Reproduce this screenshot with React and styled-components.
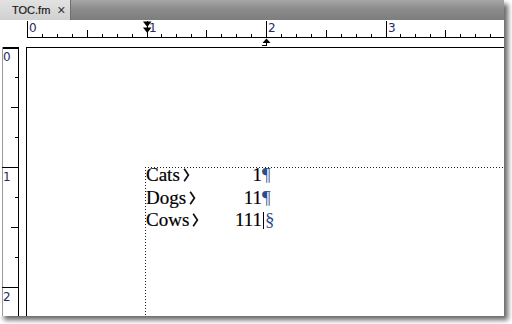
import React from "react";
import styled, { createGlobalStyle } from "styled-components";

const GlobalStyle = createGlobalStyle`
  html, body {
    margin: 0;
    background: #fff;
  }
  body {
    width: 512px;
    height: 324px;
    overflow: hidden;
  }
`;

const INCH = 119.5;
const EIGHTH = INCH / 8;

const entries = [
  { name: "Cats", page: "1", end: "para" },
  { name: "Dogs", page: "11", end: "para" },
  { name: "Cows", page: "111", end: "flow" },
];

function HRuler() {
  const ticks = [];
  for (let i = 0; i <= 32; i++) {
    const x = Math.round(27 + i * EIGHTH) + 0.5;
    if (x > 504) break;
    const top = i % 8 === 0 ? 1 : i % 4 === 0 ? 10 : 14;
    ticks.push(<line key={i} x1={x} x2={x} y1={top} y2={17} />);
  }
  const labels = [0, 1, 2, 3].map((n) => (
    <text key={n} x={Math.round(27 + n * INCH) + 2} y={11.5}>
      {n}
    </text>
  ));
  return (
    <RulerSvg width="504" height="27" shapeRendering="crispEdges">
      <g stroke="#000" strokeWidth="1">
        {ticks}
        <line x1="27" x2="504" y1="17.5" y2="17.5" />
        <line x1="266.5" x2="266.5" y1="22" y2="26" />
        <line x1="262" x2="266" y1="25.5" y2="25.5" />
      </g>
      <g fill="#000" shapeRendering="auto">
        <polygon points="143,1.5 151.5,1.5 147.25,7" />
        <polygon points="143,7.5 151.5,7.5 147.25,13" />
        <polygon points="262.5,23 270.5,23 266.5,18.5" />
      </g>
      <RulerText>{labels}</RulerText>
    </RulerSvg>
  );
}

function VRuler() {
  const ticks = [];
  for (let i = 1; i <= 9; i++) {
    const y = i * 30 + 0.5;
    const left = i % 4 === 0 ? 2 : i % 2 === 0 ? 11 : 15;
    ticks.push(<line key={i} x1={left} x2={18} y1={y} y2={y} />);
  }
  const labels = [0, 1, 2].map((n) => (
    <text key={n} x={3} y={n * 120 + 13.5}>
      {n}
    </text>
  ));
  return (
    <RulerSvg width="26" height="269" shapeRendering="crispEdges">
      <line x1="2.5" x2="2.5" y1="0" y2="269" stroke="#9a9a9a" />
      <rect x="3" y="0" width="16" height="2" fill="#000" />
      <g stroke="#000" strokeWidth="1">
        <line x1="18.5" x2="18.5" y1="0" y2="269" />
        {ticks}
      </g>
      <RulerText>{labels}</RulerText>
    </RulerSvg>
  );
}

function TabSymbol() {
  return (
    <TabGlyph width="7" height="14" viewBox="0 0 7 14">
      <path d="M1.2 0.8 L5.4 7 L1.2 13.2" fill="none" stroke="#111" strokeWidth="1.7" />
    </TabGlyph>
  );
}

function EndMark({ kind }) {
  if (kind === "flow") {
    return (
      <>
        <Cursor />
        <Symbol>§</Symbol>
      </>
    );
  }
  return <Symbol>¶</Symbol>;
}

export default function App() {
  return (
    <>
      <GlobalStyle />
      <Window>
        <TabBar>
          <Tab>
            <TabTitle>TOC.fm</TabTitle>
            <Close>×</Close>
          </Tab>
        </TabBar>
        <HRuler />
        <Main>
          <VRuler />
          <Page>
            <TextFrame>
              <TextBlock>
                {entries.map((e) => (
                  <Line key={e.name}>
                    <Leader>
                      <Name>
                        {e.name}
                        <TabSymbol />
                      </Name>
                      <span>{e.page}</span>
                    </Leader>
                    <EndMark kind={e.end} />
                  </Line>
                ))}
              </TextBlock>
            </TextFrame>
          </Page>
        </Main>
      </Window>
    </>
  );
}

const Window = styled.div`
  width: 504px;
  height: 316px;
  background: #fff;
  display: flex;
  flex-direction: column;
  overflow: hidden;
  box-shadow: 4px 4px 5px rgba(0, 0, 0, 0.6);
`;

const TabBar = styled.div`
  height: 20px;
  flex: none;
  display: flex;
  background: linear-gradient(#a6a6a6, #8c8c8c 45%, #7d7d7d);
`;

const Tab = styled.div`
  width: 71px;
  display: flex;
  align-items: center;
  gap: 7px;
  padding-left: 12px;
  box-sizing: border-box;
  background: linear-gradient(#e2e2e2, #d0d0d0);
  border-right: 1px solid #6e6e6e;
  font-family: "Liberation Sans", Arial, sans-serif;
  color: #1a1a1a;
`;

const TabTitle = styled.span`
  font-size: 11px;
  font-weight: 500;
  -webkit-text-stroke: 0.2px #1a1a1a;
`;

const Close = styled.span`
  font-size: 14px;
  line-height: 1;
  color: #333;
`;

const RulerSvg = styled.svg`
  display: block;
  flex: none;
`;

const RulerText = styled.g`
  font-family: "DejaVu Sans", Verdana, sans-serif;
  font-size: 12px;
  fill: #1f2a66;
`;

const Main = styled.div`
  flex: 1;
  display: flex;
  min-height: 0;
`;

const Page = styled.div`
  flex: 1;
  display: flex;
  box-sizing: border-box;
  border-top: 1px solid #000;
  border-left: 1px solid #000;
  padding: 119px 0 0 118px;
`;

const TextFrame = styled.div`
  flex: 1;
  background-image: repeating-linear-gradient(
      90deg,
      #222 0 1px,
      transparent 1px 3px
    ),
    repeating-linear-gradient(180deg, #222 0 1px, transparent 1px 3px);
  background-size: 100% 1px, 1px 100%;
  background-repeat: no-repeat;
  padding-left: 1px;
`;

const TextBlock = styled.div`
  margin-top: -3px;
  font-family: "Liberation Serif", "Times New Roman", serif;
  font-size: 19px;
  line-height: 22.5px;
  color: #000;
  -webkit-text-stroke: 0.2px #000;
`;

const Line = styled.div`
  display: flex;
  align-items: baseline;
`;

const Leader = styled.div`
  width: 116px;
  display: flex;
  justify-content: space-between;
`;

const Name = styled.span`
  display: inline-flex;
  align-items: baseline;
`;

const TabGlyph = styled.svg`
  display: inline-block;
  margin-left: 3px;
  align-self: center;
`;

const Symbol = styled.span`
  color: #2d4c8c;
  -webkit-text-stroke: 0;
`;

const Cursor = styled.span`
  display: inline-block;
  width: 1px;
  height: 17px;
  background: #000;
  margin: 0 1px 0 1px;
  align-self: center;
`;
